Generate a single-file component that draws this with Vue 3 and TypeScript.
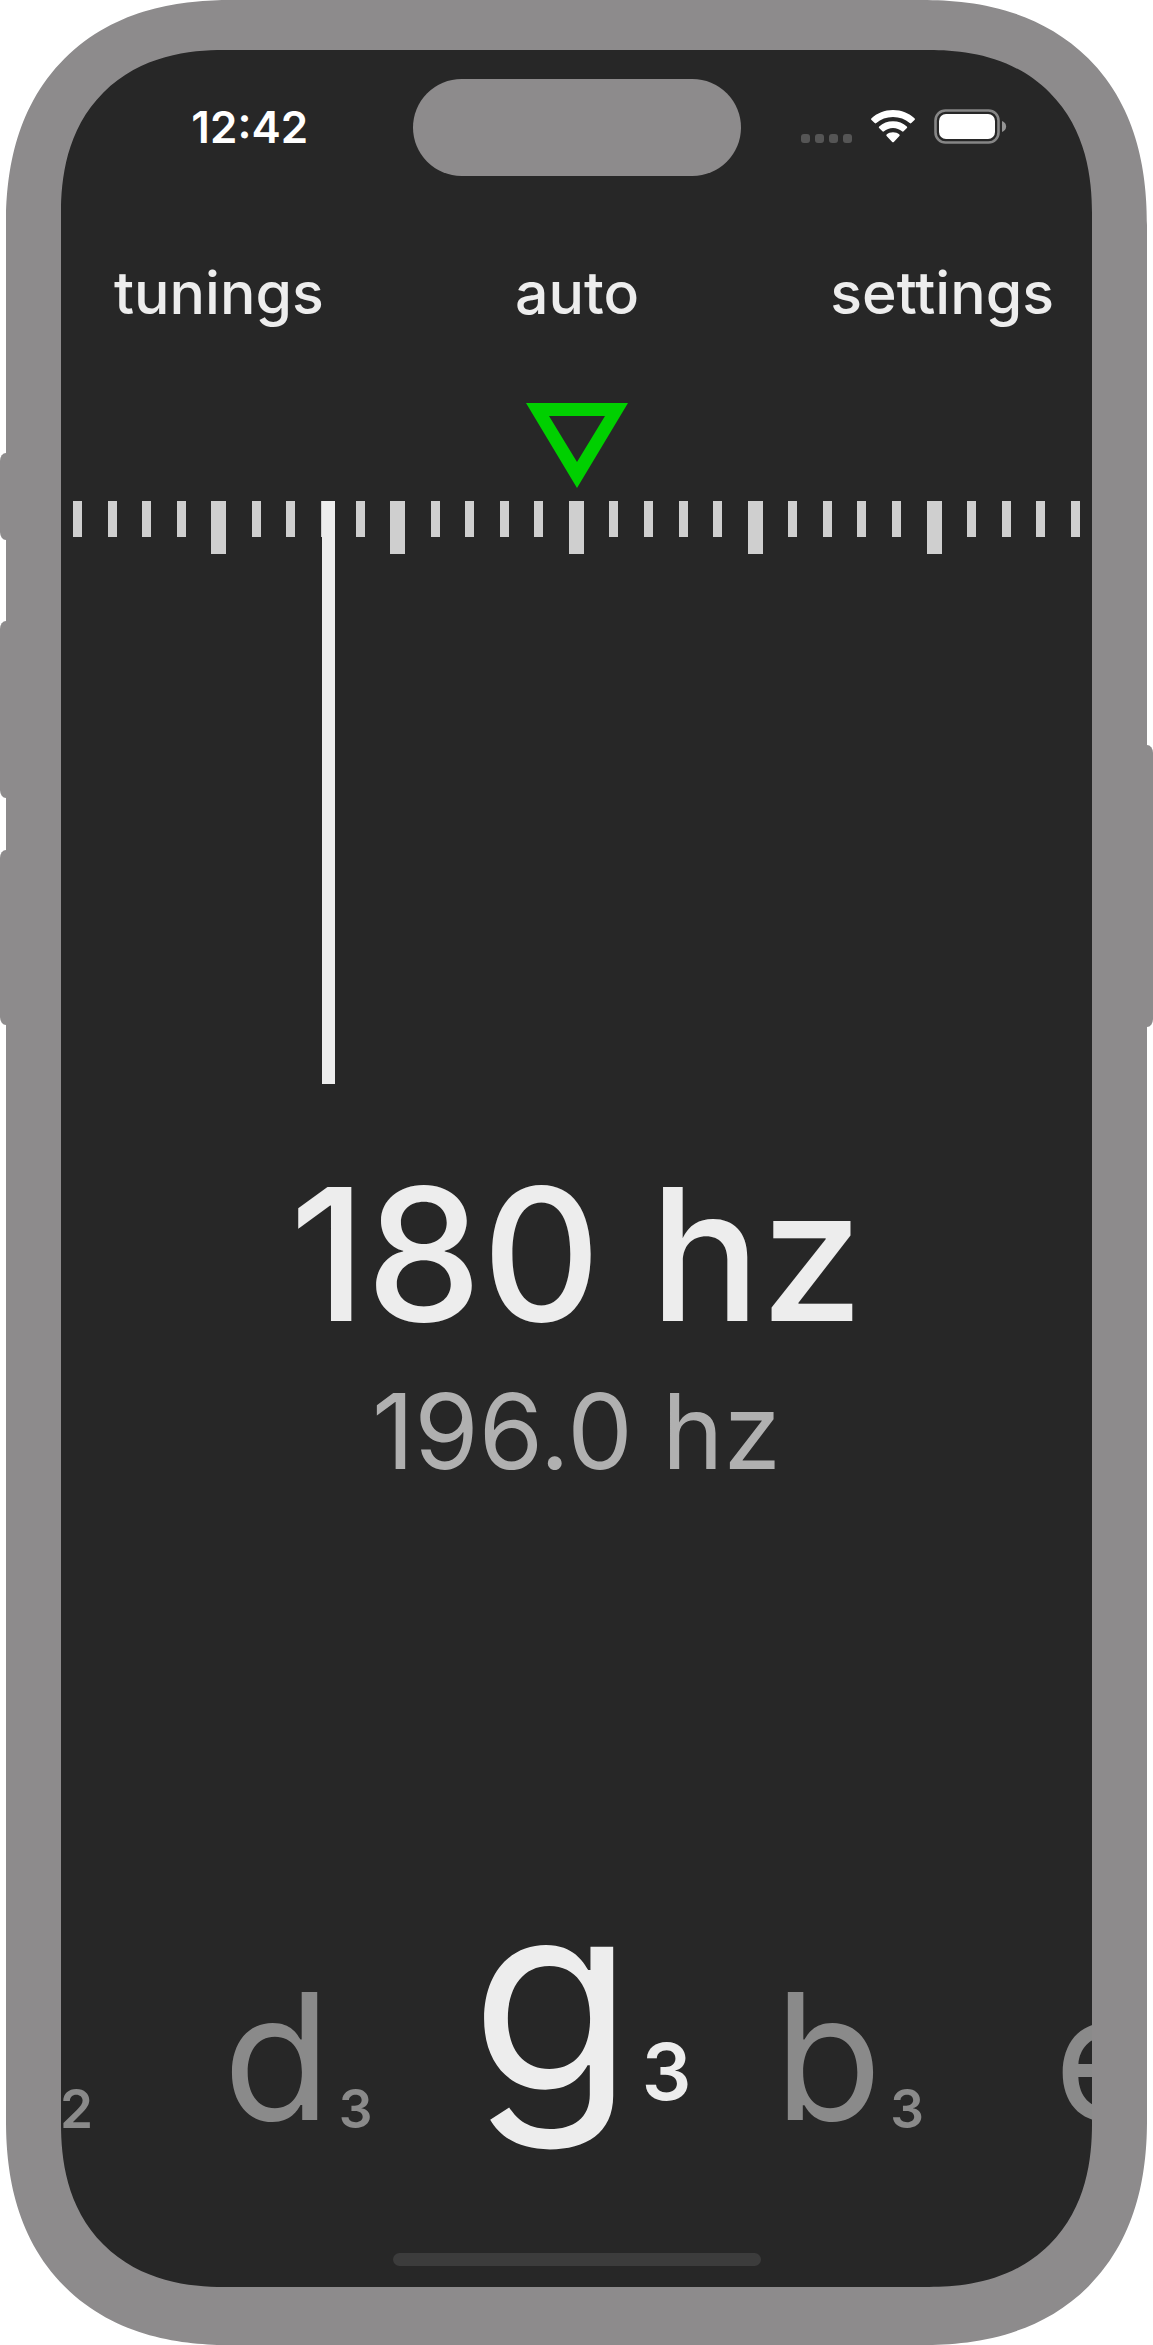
<script setup lang="ts">
import { computed, ref } from 'vue'

interface Note {
  name: string
  octave: number
}

const notes: Note[] = [
  { name: 'a', octave: 2 },
  { name: 'd', octave: 3 },
  { name: 'g', octave: 3 },
  { name: 'b', octave: 3 },
  { name: 'e', octave: 4 },
]

const selected = ref(2)
const frequency = ref(180)
const target = ref('196.0')

// 29 graduations, a long one every fifth
const ticks = Array.from({ length: 29 }, (_, i) => ({ id: i, major: i % 5 === 4 }))

// needle position along the scale, from -1 (flat) to 1 (sharp)
const deviation = ref(-0.492)
const needleLeft = computed(() => `${((deviation.value + 1) / 2) * 100}%`)
</script>

<template>
  <div class="device">
    <div class="rail rail-left">
      <span class="key key-action"></span>
      <span class="key key-up"></span>
      <span class="key key-down"></span>
    </div>

    <div class="body">
      <main class="screen">
        <header class="status">
          <time class="clock">12:42</time>
          <div class="island"></div>
          <div class="indicators">
            <svg width="51" height="35" viewBox="0 0 51 35" aria-hidden="true">
              <rect v-for="n in 4" :key="n" :x="(n - 1) * 14" y="25" width="9" height="9" rx="3" fill="#555" />
            </svg>
            <svg width="44" height="35" viewBox="0 0 44 35" fill="#fff" aria-hidden="true">
              <path d="M22 1C13.600 1 6 4.200 .500 9.300Q-.300 10.200 .500 11L3.700 14.100Q4.500 14.800 5.300 14.100C9.700 10.200 15.500 8 22 8S34.300 10.200 38.700 14.100Q39.500 14.800 40.300 14.100L43.500 11Q44.300 10.200 43.500 9.300C38 4.200 30.400 1 22 1Z" />
              <path d="M22 12.300C16.700 12.300 11.900 14.200 8.200 17.400Q7.300 18.200 8.100 19L11.400 22.300Q12.200 23 13 22.300C15.400 20.300 18.500 19 22 19S28.600 20.300 31 22.300Q31.800 23 32.600 22.300L35.900 19Q36.700 18.200 35.800 17.400C32.100 14.200 27.300 12.300 22 12.300Z" />
              <path d="M22 23.300C19.500 23.300 17.300 24.100 15.600 25.500Q14.900 26.200 15.600 26.900L21.200 32.900Q22 33.700 22.800 32.900L28.400 26.900Q29.100 26.200 28.400 25.500C26.700 24.100 24.500 23.300 22 23.300Z" />
            </svg>
            <svg width="73" height="35" viewBox="0 0 73 35" aria-hidden="true">
              <rect x="1.500" y="1.500" width="63" height="32" rx="10" fill="none" stroke="#868686" stroke-width="2.600" />
              <rect x="5" y="5" width="56" height="25" rx="7" fill="#fff" />
              <path d="M68 12C73.500 14 73.500 21 68 23Z" fill="#939393" />
            </svg>
          </div>
        </header>

        <nav class="menu">
          <button type="button">tunings</button>
          <button type="button">auto</button>
          <button type="button">settings</button>
        </nav>

        <svg class="marker" width="102" height="85" viewBox="0 0 102 85" aria-hidden="true">
          <path fill="#00d000" fill-rule="evenodd" d="M0 0H102L51 85ZM23 13L51 59L79 13Z" />
        </svg>

        <section class="gauge">
          <div class="scale">
            <span v-for="t in ticks" :key="t.id" class="tick" :class="{ major: t.major }"></span>
            <span class="needle" :style="{ left: needleLeft }"></span>
          </div>
        </section>

        <section class="readout">
          <h1>{{ frequency }} hz</h1>
          <p>{{ target }} hz</p>
        </section>

        <section class="notes">
          <button
            v-for="(note, i) in notes"
            :key="note.name"
            type="button"
            class="note"
            :class="{ active: i === selected }"
            @click="selected = i"
          >{{ note.name }}<sub>{{ note.octave }}</sub></button>
        </section>

        <div class="home"></div>
      </main>
    </div>

    <div class="rail rail-right">
      <span class="key key-power"></span>
    </div>
  </div>
</template>

<style>
body {
  margin: 0;
  background: #fff;
}
</style>

<style scoped>
.device {
  display: grid;
  grid-template-columns: 6px minmax(0, 1fr) 6px;
  font-family: Inter, "Liberation Sans", sans-serif;
  color: #ededed;
}

.rail {
  display: flex;
  flex-direction: column;
}

.key {
  background: #8d8b8c;
}

.rail-left .key {
  border-radius: 6px 0 0 6px / 8px 0 0 8px;
}

.rail-right .key {
  border-radius: 0 6px 6px 0 / 0 8px 8px 0;
}

.key-action {
  height: 87px;
  margin-top: 453px;
}

.key-up {
  height: 177px;
  margin-top: 81px;
}

.key-down {
  height: 175px;
  margin-top: 52px;
}

.key-power {
  height: 282px;
  margin-top: 745px;
}

.body {
  padding: 50px 55px 58px;
  background: #8d8b8c;
  border-radius: 200px;
}

.screen {
  display: flex;
  flex-direction: column;
  padding: 29px 0 21px;
  overflow: hidden;
  background: #272727;
  border-radius: 140px;
}

@supports (corner-shape: superellipse(1.2)) {
  .body {
    border-radius: 225px;
    corner-shape: superellipse(1.2);
  }

  .screen {
    border-radius: 163px;
    corner-shape: superellipse(1.2);
  }
}

.status {
  display: grid;
  grid-template-columns: 1fr 328px 1fr;
  align-items: center;
  padding: 0 26px;
}

.clock {
  margin-bottom: 2px;
  text-align: center;
  font-size: 44px;
  font-weight: 600;
  line-height: 52px;
  color: #fff;
}

.island {
  height: 97px;
  border-radius: 49px;
  background: #8d8b8c;
}

.indicators {
  display: flex;
  justify-content: center;
  gap: 19px;
  margin-bottom: 2px;
  padding-left: 2px;
}

button {
  padding: 0;
  border: 0;
  background: none;
  color: inherit;
  font: inherit;
  cursor: pointer;
}

.menu {
  display: flex;
  justify-content: space-between;
  margin-top: 81px;
  padding: 0 38px 0 53px;
  font-size: 59px;
  font-weight: 500;
  line-height: 72px;
}

.marker {
  align-self: center;
  margin-top: 74px;
}

.gauge {
  height: 583px;
  margin-top: 13px;
  padding: 0 12px;
}

.scale {
  position: relative;
  display: flex;
  justify-content: space-between;
  height: 100%;
}

.tick {
  width: 9px;
  height: 36px;
  background: #cfcfcf;
}

.tick.major {
  width: 15px;
  height: 53px;
}

.needle {
  position: absolute;
  top: 0;
  bottom: 0;
  width: 13px;
  margin-left: -7px;
  background: #ededed;
}

.readout {
  margin-top: 70px;
  text-align: center;
}

.readout h1 {
  margin: 0;
  font-size: 184px;
  font-weight: 500;
  line-height: 200px;
}

.readout p {
  margin: 17px 0 0;
  font-size: 104px;
  line-height: 120px;
  color: #b0b0b0;
}

.notes {
  display: flex;
  justify-content: center;
  align-items: flex-end;
  gap: 130px;
  margin-top: 371px;
}

.note {
  flex: none;
  margin-bottom: 2px;
  font-size: 176px;
  line-height: 172px;
  white-space: nowrap;
  color: #8a8a8a;
}

.note sub {
  margin-left: 8px;
  font-size: 53px;
  font-weight: 600;
  line-height: 0;
  vertical-align: -8px;
}

.note.active {
  margin: 0 -47px 16px -32px;
  font-size: 266px;
  line-height: 266px;
  color: #ededed;
}

.note.active sub {
  font-size: 78px;
}

.home {
  align-self: center;
  width: 368px;
  height: 13px;
  margin-top: 109px;
  border-radius: 7px;
  background: #3c3c3c;
}
</style>
